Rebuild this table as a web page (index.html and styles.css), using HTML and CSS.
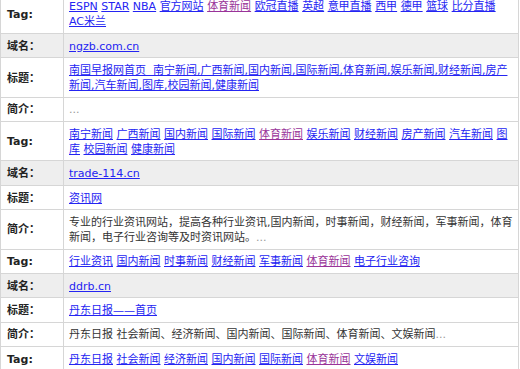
FILE: index.html
```html
<!DOCTYPE html>
<html lang="zh">
<head>
<meta charset="utf-8">
<title>域名列表</title>
<link rel="stylesheet" href="styles.css">
</head>
<body>
<div class="list">
  <div class="k">Tag:</div>
  <div class="v"><a href="#">ESPN</a> <a href="#">STAR</a> <a href="#">NBA</a> <a href="#">官方网站</a> <a href="#" class="seen">体育新闻</a> <a href="#">欧冠直播</a> <a href="#">英超</a> <a href="#">意甲直播</a> <a href="#">西甲</a> <a href="#">德甲</a> <a href="#">篮球</a> <a href="#">比分直播</a> <a href="#">AC米兰</a></div>

  <div class="k alt">域名：</div>
  <div class="v alt"><a href="#">ngzb.com.cn</a></div>
  <div class="k">标题：</div>
  <div class="v"><a href="#">南国早报网首页&nbsp; 南宁新闻,广西新闻,国内新闻,国际新闻,体育新闻,娱乐新闻,财经新闻,房产新闻,汽车新闻,图库,校园新闻,健康新闻</a></div>
  <div class="k">简介：</div>
  <div class="v"><span class="more">...</span></div>
  <div class="k">Tag:</div>
  <div class="v"><a href="#">南宁新闻</a> <a href="#">广西新闻</a> <a href="#">国内新闻</a> <a href="#">国际新闻</a> <a href="#" class="seen">体育新闻</a> <a href="#">娱乐新闻</a> <a href="#">财经新闻</a> <a href="#">房产新闻</a> <a href="#">汽车新闻</a> <a href="#">图库</a> <a href="#">校园新闻</a> <a href="#">健康新闻</a></div>

  <div class="k alt">域名：</div>
  <div class="v alt"><a href="#">trade-114.cn</a></div>
  <div class="k">标题：</div>
  <div class="v"><a href="#">资讯网</a></div>
  <div class="k">简介：</div>
  <div class="v">专业的行业资讯网站，提高各种行业资讯,国内新闻，时事新闻，财经新闻，军事新闻，体育新闻，电子行业咨询等及时资讯网站。<span class="more">...</span></div>
  <div class="k">Tag:</div>
  <div class="v"><a href="#">行业资讯</a> <a href="#">国内新闻</a> <a href="#">时事新闻</a> <a href="#">财经新闻</a> <a href="#">军事新闻</a> <a href="#" class="seen">体育新闻</a> <a href="#">电子行业咨询</a></div>

  <div class="k alt">域名：</div>
  <div class="v alt"><a href="#">ddrb.cn</a></div>
  <div class="k">标题：</div>
  <div class="v"><a href="#">丹东日报——首页</a></div>
  <div class="k">简介：</div>
  <div class="v">丹东日报 社会新闻、经济新闻、国内新闻、国际新闻、体育新闻、文娱新闻<span class="more">...</span></div>
  <div class="k">Tag:</div>
  <div class="v"><a href="#">丹东日报</a> <a href="#">社会新闻</a> <a href="#">经济新闻</a> <a href="#">国内新闻</a> <a href="#">国际新闻</a> <a href="#" class="seen">体育新闻</a> <a href="#">文娱新闻</a></div>
</div>
</body>
</html>
```

FILE: styles.css
```css
html, body {
  margin: 0;
  padding: 0;
  background: #fff;
}

body {
  font-family: "DejaVu Sans", "Noto Sans CJK SC", sans-serif;
  font-size: 11px;
  line-height: 15px;
  color: #333;
  overflow: hidden;
}

.list {
  display: grid;
  grid-template-columns: 62px 1fr;
  gap: 1px;
  padding: 1px;
  width: 519px;
  box-sizing: border-box;
  background: #d6d6d6;
  margin-top: -6.4px;
}

.k,
.v {
  background: #fff;
  padding: 4.7px 4px 3.7px 5px;
}

.k {
  display: flex;
  align-items: center;
  padding-left: 6px;
  font-weight: bold;
  color: #222;
}

.alt {
  background: #eee;
}

.v a {
  color: #2424f2;
  text-decoration: underline;
}

.v a.seen {
  color: #993399;
}

.more {
  color: #999;
}
```
